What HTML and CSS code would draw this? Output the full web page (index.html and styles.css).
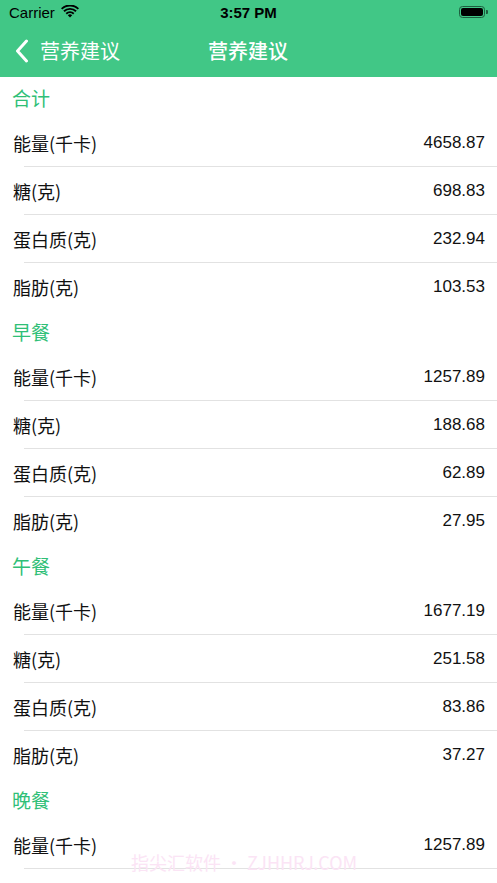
FILE: index.html
```html
<!DOCTYPE html>
<html lang="zh-CN">
<head>
<meta charset="utf-8">
<title>营养建议</title>
<link rel="stylesheet" href="styles.css">
</head>
<body>
<div class="screen">
  <header class="top">
    <div class="status">
      <div class="status-left">
        <span class="carrier">Carrier</span>
        <svg class="wifi" width="18" height="13" viewBox="0 0 18 13">
          <path d="M9 12.6 L11.2 10.2 A3.2 3.2 0 0 0 6.8 10.2 Z" fill="#000"/>
          <path d="M4.6 8 A6.4 6.4 0 0 1 13.4 8 L12.1 9.4 A4.6 4.6 0 0 0 5.9 9.4 Z" fill="#000"/>
          <path d="M2.3 5.6 A9.6 9.6 0 0 1 15.7 5.6 L14.4 7 A7.8 7.8 0 0 0 3.6 7 Z" fill="#000"/>
          <path d="M0 3.2 A12.8 12.8 0 0 1 18 3.2 L16.7 4.6 A11 11 0 0 0 1.3 4.6 Z" fill="#000"/>
        </svg>
      </div>
      <span class="time">3:57 PM</span>
      <div class="battery">
        <div class="battery-body"><div class="battery-fill"></div></div>
        <div class="battery-nub"></div>
      </div>
    </div>
    <nav class="nav">
      <div class="back">
        <svg class="chevron" width="14" height="24" viewBox="0 0 14 24">
          <path d="M11.5 2 L2.5 12 L11.5 22" fill="none" stroke="#fff" stroke-width="3" stroke-linecap="round" stroke-linejoin="round"/>
        </svg>
        <span class="back-text">营养建议</span>
      </div>
      <div class="title">营养建议</div>
    </nav>
  </header>

  <main class="list">
    <section class="group">
      <h2 class="group-title">合计</h2>
      <div class="row"><span class="label">能量(千卡)</span><span class="value">4658.87</span></div>
      <div class="row"><span class="label">糖(克)</span><span class="value">698.83</span></div>
      <div class="row"><span class="label">蛋白质(克)</span><span class="value">232.94</span></div>
      <div class="row"><span class="label">脂肪(克)</span><span class="value">103.53</span></div>
    </section>
    <section class="group">
      <h2 class="group-title">早餐</h2>
      <div class="row"><span class="label">能量(千卡)</span><span class="value">1257.89</span></div>
      <div class="row"><span class="label">糖(克)</span><span class="value">188.68</span></div>
      <div class="row"><span class="label">蛋白质(克)</span><span class="value">62.89</span></div>
      <div class="row"><span class="label">脂肪(克)</span><span class="value">27.95</span></div>
    </section>
    <section class="group">
      <h2 class="group-title">午餐</h2>
      <div class="row"><span class="label">能量(千卡)</span><span class="value">1677.19</span></div>
      <div class="row"><span class="label">糖(克)</span><span class="value">251.58</span></div>
      <div class="row"><span class="label">蛋白质(克)</span><span class="value">83.86</span></div>
      <div class="row"><span class="label">脂肪(克)</span><span class="value">37.27</span></div>
    </section>
    <section class="group">
      <h2 class="group-title">晚餐</h2>
      <div class="row row-sep"><span class="label">能量(千卡)</span><span class="value">1257.89</span></div>
    </section>
  </main>

  <div class="watermark">指尖汇软件 • ZJHHRJ.COM</div>
</div>
</body>
</html>
```

FILE: styles.css
```css
* { box-sizing: border-box; }

html, body {
  margin: 0;
  padding: 0;
  background: #ffffff;
}

body {
  font-family: "Noto Sans CJK SC", "Noto Sans", sans-serif;
  color: #111;
}

.screen {
  position: relative;
  width: 497px;
  height: 883px;
  overflow: hidden;
  background: #fff;
}

.top {
  background: #41c786;
}

.status {
  height: 24px;
  display: flex;
  align-items: center;
  justify-content: space-between;
  padding: 0 9px 0 9px;
}

.status-left {
  display: flex;
  align-items: center;
  gap: 6px;
  width: 120px;
}

.carrier {
  font-family: "Liberation Sans", "Noto Sans", sans-serif;
  font-size: 15px;
  color: #000;
  line-height: 1;
}

.wifi { display: block; margin-top: -2px; }

.time {
  font-family: "Liberation Sans", "Noto Sans", sans-serif;
  font-weight: 700;
  font-size: 15px;
  color: #000;
  line-height: 1;
}

.battery {
  width: 120px;
  display: flex;
  justify-content: flex-end;
  align-items: center;
}

.battery-body {
  width: 26px;
  height: 12px;
  border: 1px solid #1d5e3f;
  border-radius: 3.5px;
  padding: 1px;
}

.battery-fill {
  width: 100%;
  height: 100%;
  background: #000;
  border-radius: 2px;
}

.battery-nub {
  width: 2px;
  height: 4px;
  background: #1d5e3f;
  border-radius: 0 1px 1px 0;
  margin-left: 1px;
}

.nav {
  height: 53px;
  display: grid;
  grid-template-columns: 1fr auto 1fr;
  align-items: center;
  padding: 0 0 0 15px;
}

.back {
  display: flex;
  align-items: center;
  gap: 11px;
  color: #fff;
}

.chevron { display: block; }

.back-text {
  font-size: 20px;
  color: #fff;
  line-height: 1;
}

.title {
  grid-column: 2;
  font-size: 20px;
  font-weight: 500;
  color: #fff;
  line-height: 1;
  transform: translateX(-8px);
}

.list {
  display: flex;
  flex-direction: column;
}

.group {
  display: flex;
  flex-direction: column;
}

.group-title {
  margin: 0;
  height: 42px;
  display: flex;
  align-items: center;
  padding-left: 12px;
  padding-bottom: 1px;
  font-size: 19px;
  font-weight: 400;
  color: #2fbf77;
}

.row {
  height: 48px;
  display: flex;
  align-items: center;
  justify-content: space-between;
  padding: 0 12px 1px 13px;
  background: linear-gradient(#e2e2e2, #e2e2e2) no-repeat 24px 100% / calc(100% - 24px) 1px;
}

.row:last-child {
  background: none;
}

.row.row-sep {
  background: linear-gradient(#e2e2e2, #e2e2e2) no-repeat 24px 100% / calc(100% - 24px) 1px;
}

.label {
  font-size: 18px;
  color: #111;
}

.value {
  font-family: "Liberation Sans", "Noto Sans", sans-serif;
  font-size: 17px;
  color: #111;
}

.watermark {
  position: absolute;
  left: 131px;
  top: 849px;
  font-size: 18px;
  color: #fbe4f5;
  white-space: nowrap;
  pointer-events: none;
}
```
